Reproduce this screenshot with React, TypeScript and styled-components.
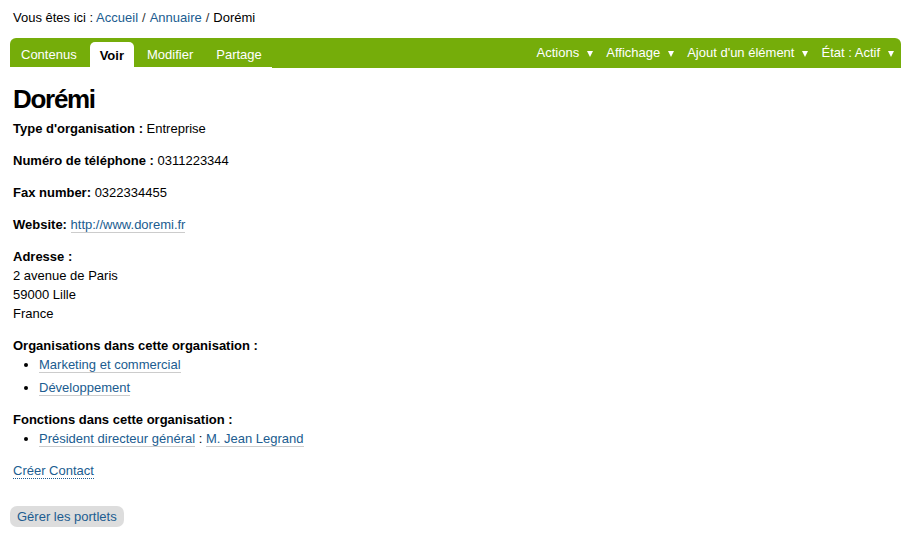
import React from "react";
import styled, { createGlobalStyle } from "styled-components";

const Global = createGlobalStyle`
  html, body { margin: 0; padding: 0; background: #fff; }
  body {
    font-family: "Liberation Sans", Arial, sans-serif;
    font-size: 13px;
    line-height: 19px;
    color: #000;
  }
  * { box-sizing: border-box; }
`;

const Page = styled.div`
  padding: 8px 10px 0 10px;
`;

const Breadcrumbs = styled.div`
  padding-left: 3px;
  line-height: 19px;
  margin-bottom: 11px;
`;

const Sep = styled.span`
  margin: 0 4px;
  color: #333;
`;

const Link = styled.a<{ $plain?: boolean }>`
  color: #205c90;
  text-decoration: none;
  border-bottom: ${(p) => (p.$plain ? "none" : "1px solid #ccc")};
`;

const EditBar = styled.div`
  display: flex;
  align-items: stretch;
  justify-content: space-between;
  background: #75ad0a;
  height: 30px;
  border-radius: 6px 6px 0 0;
`;

const Tabs = styled.ul`
  list-style: none;
  margin: 0;
  padding: 0 0 0 1px;
  display: flex;
  align-items: flex-end;
  gap: 3px;
  border-bottom: 1px solid #fff;
`;

const Tab = styled.li<{ $active?: boolean }>`
  padding: 0 10px;
  display: flex;
  align-items: center;
  border-radius: 5px 5px 0 0;
  background: ${(p) => (p.$active ? "#fff" : "transparent")};
  color: ${(p) => (p.$active ? "#000" : "#fff")};
  font-weight: ${(p) => (p.$active ? "bold" : "normal")};
  margin-bottom: ${(p) => (p.$active ? "-1px" : "0")};
  height: ${(p) => (p.$active ? "26px" : "25px")};
`;

const Menus = styled.ul`
  list-style: none;
  margin: 0;
  padding: 0 7px 1px 0;
  display: flex;
  align-items: center;
  gap: 13px;
`;

const Menu = styled.li`
  color: #fff;
  display: flex;
  align-items: center;
  gap: 8px;
`;

const Arrow = styled.span`
  display: inline-block;
  width: 0;
  height: 0;
  border-left: 3px solid transparent;
  border-right: 3px solid transparent;
  border-top: 6px solid #fff;
  margin-top: 2px;
`;

const Content = styled.div`
  padding-left: 3px;
`;

const Title = styled.h1`
  font-size: 26px;
  line-height: 30px;
  letter-spacing: -1.3px;
  font-weight: bold;
  margin: 16px 0 5px 0;
`;

const Field = styled.div`
  margin-bottom: 13px;
`;

const Label = styled.span`
  font-weight: bold;
`;

const Block = styled.div``;

const List = styled.ul`
  margin: 0;
  padding-left: 26px;
  li + li { margin-top: 4px; }
`;

const DottedLink = styled.a`
  color: #205c90;
  text-decoration: none;
  border-bottom: 1px dotted #205c90;
`;

const ManageButton = styled.button`
  margin-top: 26px;
  font-family: "Liberation Sans", Arial, sans-serif;
  font-size: 13px;
  line-height: 19px;
  color: #205c90;
  background: #ddd;
  border: none;
  border-radius: 7px;
  padding: 1px 7px;
  height: 21px;
`;

export default function App() {
  return (
    <>
      <Global />
      <Page>
        <Breadcrumbs>
          Vous êtes ici : <Link $plain href="#">Accueil</Link>
          <Sep>/</Sep>
          <Link $plain href="#">Annuaire</Link>
          <Sep>/</Sep>
          Dorémi
        </Breadcrumbs>
        <EditBar>
          <Tabs>
            <Tab>Contenus</Tab>
            <Tab $active>Voir</Tab>
            <Tab>Modifier</Tab>
            <Tab>Partage</Tab>
          </Tabs>
          <Menus>
            <Menu>Actions <Arrow /></Menu>
            <Menu>Affichage <Arrow /></Menu>
            <Menu>Ajout d'un élément <Arrow /></Menu>
            <Menu>État : Actif <Arrow /></Menu>
          </Menus>
        </EditBar>
        <Content>
          <Title>Dorémi</Title>
          <Field>
            <Label>Type d'organisation :</Label> Entreprise
          </Field>
          <Field>
            <Label>Numéro de téléphone :</Label> 0311223344
          </Field>
          <Field>
            <Label>Fax number:</Label> 0322334455
          </Field>
          <Field>
            <Label>Website:</Label> <Link href="#">http://www.doremi.fr</Link>
          </Field>
          <Field>
            <Label>Adresse :</Label>
            <Block>2 avenue de Paris</Block>
            <Block>59000 Lille</Block>
            <Block>France</Block>
          </Field>
          <Field>
            <Label>Organisations dans cette organisation :</Label>
            <List>
              <li><Link href="#">Marketing et commercial</Link></li>
              <li><Link href="#">Développement</Link></li>
            </List>
          </Field>
          <Field>
            <Label>Fonctions dans cette organisation :</Label>
            <List>
              <li>
                <Link href="#">Président directeur général</Link> :{" "}
                <Link href="#">M. Jean Legrand</Link>
              </li>
            </List>
          </Field>
          <DottedLink href="#">Créer Contact</DottedLink>
        </Content>
        <ManageButton>Gérer les portlets</ManageButton>
      </Page>
    </>
  );
}
